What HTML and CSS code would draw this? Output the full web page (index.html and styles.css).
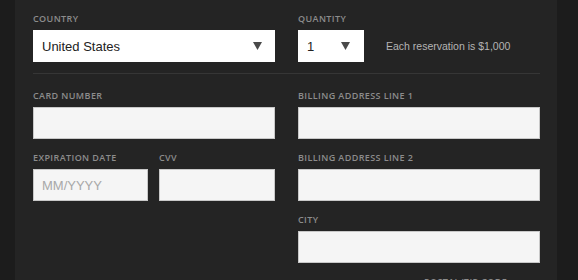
FILE: index.html
```html
<!DOCTYPE html>
<html lang="en">
<head>
    <meta charset="UTF-8">
    <meta name="viewport" content="width=device-width, initial-scale=1.0">
    <title>Reservation Payment</title>
    <link rel="stylesheet" href="styles.css">
</head>
<body>
    <div class="page">
        <div class="side side-left"></div>
        <form class="panel">
            <div class="row">
                <div class="field">
                    <label class="label">Country</label>
                    <div class="select select-wide">
                        <span class="select-value">United States</span>
                        <svg class="arrow" width="9" height="8" viewBox="0 0 9 8"><path d="M0 0 H9 L4.5 8 Z" fill="#4a4a4a"/></svg>
                    </div>
                </div>
                <div class="field">
                    <label class="label">Quantity</label>
                    <div class="qty-line">
                        <div class="select select-qty">
                            <span class="select-value">1</span>
                            <svg class="arrow" width="9" height="8" viewBox="0 0 9 8"><path d="M0 0 H9 L4.5 8 Z" fill="#4a4a4a"/></svg>
                        </div>
                        <span class="note">Each reservation is $1,000</span>
                    </div>
                </div>
            </div>

            <hr class="divider">

            <div class="row">
                <div class="col">
                    <div class="field">
                        <label class="label">Card Number</label>
                        <input class="input" type="text">
                    </div>
                    <div class="split">
                        <div class="field">
                            <label class="label">Expiration Date</label>
                            <input class="input" type="text" placeholder="MM/YYYY">
                        </div>
                        <div class="field">
                            <label class="label">CVV</label>
                            <input class="input" type="text">
                        </div>
                    </div>
                </div>
                <div class="col">
                    <div class="field">
                        <label class="label">Billing Address Line 1</label>
                        <input class="input" type="text">
                    </div>
                    <div class="field">
                        <label class="label">Billing Address Line 2</label>
                        <input class="input" type="text">
                    </div>
                    <div class="field">
                        <label class="label">City</label>
                        <input class="input" type="text">
                    </div>
                    <div class="split">
                        <div class="field">
                            <label class="label">&nbsp;</label>
                        </div>
                        <div class="field">
                            <label class="label">Postal/Zip Code</label>
                            <input class="input" type="text">
                        </div>
                    </div>
                </div>
            </div>
        </form>
        <div class="side side-right"></div>
    </div>
</body>
</html>
```

FILE: styles.css
```css
* {
    margin: 0;
    padding: 0;
    box-sizing: border-box;
}

body {
    font-family: 'Liberation Sans', Arial, sans-serif;
    background: #1c1c1c;
    height: 280px;
    overflow: hidden;
}

.page {
    display: flex;
    height: 100%;
}

.side {
    background: #1c1c1c;
}

.side-left {
    width: 15px;
    flex-shrink: 0;
}

.side-right {
    width: 21px;
    flex-shrink: 0;
}

.panel {
    flex: 1;
    background: #242424;
    padding: 13px 17px 0 18px;
}

.row {
    display: grid;
    grid-template-columns: 242px 242px;
    column-gap: 23px;
}

.col {
    display: flex;
    flex-direction: column;
    gap: 13px;
}

.split {
    display: grid;
    grid-template-columns: 115px 116px;
    column-gap: 11px;
}

.field {
    display: flex;
    flex-direction: column;
}

.label {
    font-family: 'Open Sans', sans-serif;
    font-weight: 600;
    font-size: 9px;
    line-height: 12px;
    letter-spacing: 0.4px;
    text-transform: uppercase;
    color: #8c8c8c;
    margin-bottom: 5px;
}

.select {
    position: relative;
    height: 32px;
    background: #fff;
    display: flex;
    align-items: center;
    padding-left: 9px;
    font-size: 13px;
    color: #222;
}

.select-qty {
    width: 66px;
}

.arrow {
    position: absolute;
    top: 12px;
    right: 13px;
}

.select-qty .arrow {
    right: 14px;
}

.qty-line {
    display: flex;
    align-items: center;
    gap: 22px;
}

.note {
    font-size: 10.5px;
    color: #b4b4b4;
}

.divider {
    border: none;
    border-top: 1px solid #363636;
    margin: 11px 0 16px;
}

.input {
    appearance: none;
    height: 32px;
    width: 100%;
    background: #f5f5f5;
    border: 1px solid #c8c8c8;
    border-radius: 0;
    padding: 0 8px;
    font-family: 'Liberation Sans', Arial, sans-serif;
    font-size: 13px;
    color: #222;
}

.input::placeholder {
    color: #a8a8a8;
}
```
